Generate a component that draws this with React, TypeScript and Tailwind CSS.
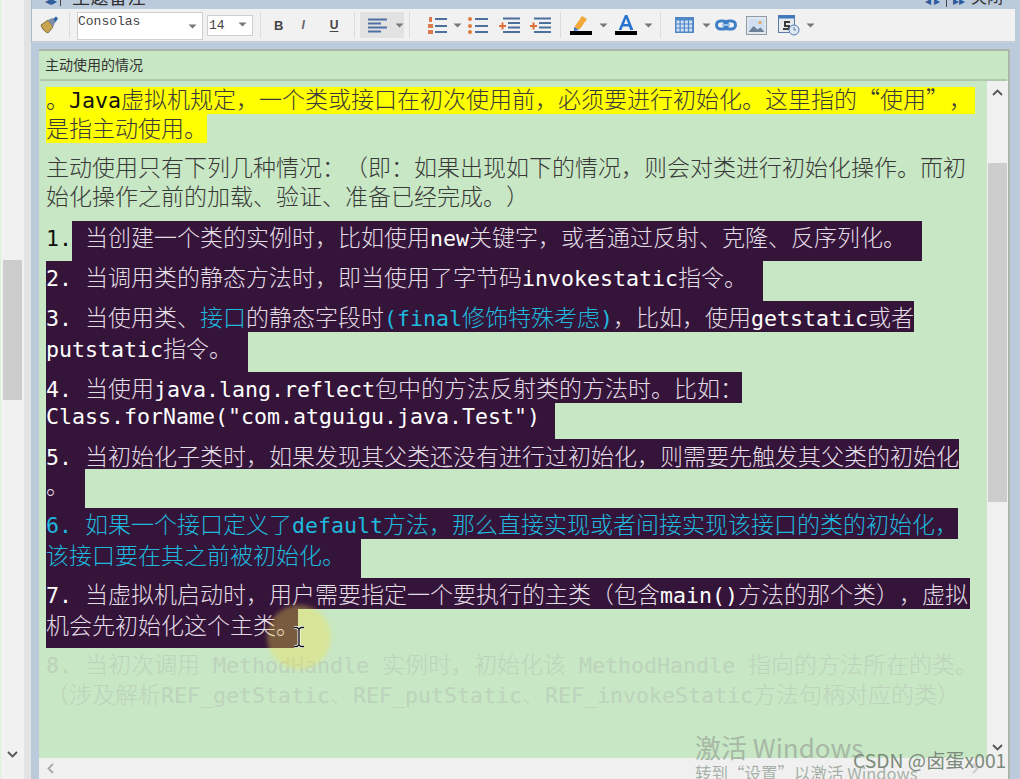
import React from "react";

const cjk = "font-['Noto_Sans_CJK_SC','Noto_Sans_CJK_JP',sans-serif] text-[23px] font-light [text-spacing-trim:space-all] [text-autospace:no-autospace]";
const M = ({ children }: { children: React.ReactNode }) => (
  <span className="font-['DejaVu_Sans_Mono',monospace] text-[21.6px] font-normal">{children}</span>
);
const W = ({ children }: { children: React.ReactNode }) => (
  <span className="font-['DejaVu_Sans_Mono',monospace] text-[21.6px] font-normal text-white">{children}</span>
);
const C = ({ children }: { children: React.ReactNode }) => <span className="text-[#1fb9de]">{children}</span>;

const Caret = ({ className = "" }: { className?: string }) => (
  <svg width="9" height="5" viewBox="0 0 9 5" className={className}>
    <path d="M0.5 0.5h8L4.5 4.5z" fill="#777" />
  </svg>
);
const Sep = ({ className = "" }: { className?: string }) => <div className={`w-px h-[26px] bg-[#dcdcdc] ${className}`} />;

const Line = ({ w, h, lead = "leading-[30px]", children, cyan = false }: { w: string; h: string; lead?: string; children: React.ReactNode; cyan?: boolean }) => (
  <div className={`whitespace-nowrap bg-[#35143a] ${w} ${h} ${lead} ${cyan ? "text-[#1fb9de]" : "text-[#e2dce4]"}`}>{children}</div>
);

const Brush = () => (
  <svg width="20" height="18" viewBox="0 0 20 18">
    <path d="M1 9l7-5 5 7-5 6C5 16 2 13 1 9z" fill="#c9a550" stroke="#6b5a2e" strokeWidth="0.8" />
    <path d="M8 4l4-2 4 3-3 6z" fill="#7d8fa8" />
    <path d="M13 3l3-2.4 2 2L15.6 6z" fill="#2f62a8" />
  </svg>
);

const AlignLeft = () => (
  <svg width="19" height="15" viewBox="0 0 19 15" fill="#4d71a3">
    <rect x="0" y="0.5" width="19" height="2" />
    <rect x="0" y="4.5" width="13" height="2" />
    <rect x="0" y="8.5" width="19" height="2" />
    <rect x="0" y="12.5" width="13" height="2" />
  </svg>
);
const Numbered = () => (
  <svg width="19" height="19" viewBox="0 0 19 19">
    <g fill="#de7a4e">
      <rect x="1" y="1" width="3" height="5" />
      <rect x="0" y="8" width="5" height="4" />
      <rect x="0" y="14" width="5" height="4" />
    </g>
    <g fill="#4d6f9e">
      <rect x="7" y="2" width="12" height="2" />
      <rect x="7" y="9" width="12" height="2" />
      <rect x="7" y="15" width="12" height="2" />
    </g>
  </svg>
);
const Bullets = () => (
  <svg width="20" height="19" viewBox="0 0 20 19">
    <g fill="#de7a3e">
      <circle cx="2" cy="3" r="2" />
      <circle cx="2" cy="10" r="2" />
      <circle cx="2" cy="16" r="2" />
    </g>
    <g fill="#4d6f9e">
      <rect x="7" y="2" width="13" height="2" />
      <rect x="7" y="9" width="13" height="2" />
      <rect x="7" y="15" width="13" height="2" />
    </g>
  </svg>
);
const Indent = () => (
  <svg width="21" height="17" viewBox="0 0 21 17">
    <path d="M0 8h2.5V5.5h2V8H7v2H4.5v2.5h-2V10H0z" fill="#e0703a" />
    <g fill="#4d6f9e">
      <rect x="4" y="0.5" width="17" height="2" />
      <rect x="9" y="5" width="12" height="2" />
      <rect x="9" y="9.5" width="12" height="2" />
      <rect x="4" y="14" width="17" height="2" />
    </g>
  </svg>
);
const Highlighter = () => (
  <svg width="22" height="20" viewBox="0 0 22 20">
    <path d="M5 11L12 1l5 3-7 10-5 1z" fill="#f0a93a" />
    <path d="M4 12l5 3-5 1z" fill="#3a78c8" />
    <rect x="0" y="16" width="22" height="4" fill="#000" />
  </svg>
);
const LetterA = () => (
  <svg width="22" height="20" viewBox="0 0 22 20">
    <path d="M11 0h2.4l6 15h-3.2l-1.3-3.6H8.8L7.5 15H4.6zm-.9 9h4l-2-5.4z" fill="#2874cf" transform="translate(-1 0)" />
    <rect x="0" y="16" width="22" height="4" fill="#000" />
  </svg>
);
const Table = () => (
  <svg width="19" height="16" viewBox="0 0 19 16">
    <rect width="19" height="16" fill="#4f86c6" />
    <g fill="#cfe0f2">
      {[0, 1, 2, 3].map((c) =>
        [0, 1, 2].map((r) => <rect key={`${c}-${r}`} x={1.5 + c * 4.2} y={3.5 + r * 4} width="3" height="3" />)
      )}
    </g>
  </svg>
);
const LinkIcon = () => (
  <svg width="22" height="12" viewBox="0 0 22 12" fill="none">
    <rect x="1.5" y="2" width="11" height="8" rx="4" stroke="#3f7fc6" strokeWidth="3" />
    <rect x="9.5" y="2" width="11" height="8" rx="4" stroke="#3f7fc6" strokeWidth="3" />
    <rect x="7" y="5" width="8" height="2" fill="#9cc3ea" />
  </svg>
);
const ImageIcon = () => (
  <svg width="21" height="19" viewBox="0 0 21 19">
    <rect x="0.5" y="0.5" width="20" height="18" fill="#e4e8ec" stroke="#8e9aa6" />
    <rect x="2.5" y="3" width="16" height="13" fill="#cfdff0" />
    <path d="M2.5 16l5-6 4 3.5 3-2 4 4.5z" fill="#6d8098" />
    <circle cx="14" cy="6.5" r="1.6" fill="#e9a15e" />
  </svg>
);
const Snippet = () => (
  <svg width="22" height="21" viewBox="0 0 22 21">
    <rect x="0.5" y="0.5" width="16" height="17" fill="#e7ebf0" stroke="#5e7da6" />
    <rect x="0.5" y="0.5" width="16" height="3" fill="#3f78bd" />
    <path d="M6 6h6v2H8v2h4v5H5v-2h5v-1H6z" fill="#3b3b3b" />
    <circle cx="16" cy="15" r="5" fill="#dfe7f0" stroke="#4d7cb5" />
    <path d="M16 12v3h2" stroke="#4d7cb5" fill="none" />
  </svg>
);

const Chevron = ({ dir, className = "" }: { dir: "up" | "down" | "left" | "right"; className?: string }) => {
  const d = { up: "M1 6l4.5-4.5L10 6", down: "M1 1l4.5 4.5L10 1", left: "M6 1L1.5 5.5 6 10", right: "M1 1l4.5 4.5L1 10" }[dir];
  const horiz = dir === "up" || dir === "down";
  return (
    <svg width={horiz ? 11 : 7} height={horiz ? 7 : 11} viewBox={horiz ? "0 0 11 7" : "0 0 7 11"} fill="none" className={className}>
      <path d={d} stroke="currentColor" strokeWidth="1.8" />
    </svg>
  );
};

export default function App() {
  return (
    <div className={`relative w-[1020px] h-[779px] overflow-hidden flex bg-[#bccbdc] ${cjk}`}>
      {/* outer left scrollbar */}
      <div className="w-[24px] h-full shrink-0 bg-[#f1f1f1] border-l border-[#dff0dc] flex flex-col items-center text-[#555]">
        <div className="w-[19px] h-[140px] mt-[260px] bg-[#cdcdcd]" />
        <Chevron dir="down" className="mt-[351px]" />
      </div>
      <div className="w-[7px] h-full shrink-0 bg-[#e3e3e3]" />

      {/* main pane */}
      <div className="flex-1 min-w-0 flex flex-col">
        {/* title, cut off by the top of the picture */}
        <div className="h-[9px] shrink-0 overflow-hidden flex bg-[#bccbdc] text-[#333] text-[18px] font-normal leading-[18px] border-l border-[#a9b8ca]">
          <span className="ml-[13px] text-[#2a5a9a] text-[12px] -mt-[9px]">◂▸</span>
          <span className="ml-[3px] w-px h-[6px] bg-[#444]" />
          <span className="ml-[11px] -mt-[13px] tracking-[0.5px]">主题备注</span>
          <span className="ml-auto mr-[17px] -mt-[13px] flex gap-[6px]">
            <span className="text-[#2a5a9a] text-[12px] mt-[4px]">◂ ▸</span>
            <span className="w-px h-[20px] bg-[#444]" />
            <span className="text-[#2a5a9a] text-[12px] mt-[4px]">▸▸</span>
            <span className="text-[16px]">关闭</span>
          </span>
        </div>

        {/* toolbar */}
        <div className="h-[34px] shrink-0 mr-[5px] bg-[#f1f1f1] border-b-[2px] border-[#c6ced8] border-l border-l-[#a9b8ca] flex items-center">
          <div className="ml-[8px]"><Brush /></div>
          <Sep className="ml-[9px]" />
          <div className="ml-[7px] -mt-[3px] relative w-[126px] h-[28px] mb-[-4px] bg-white border border-[#cfcfcf] flex items-start">
            <span className="font-['Liberation_Mono',monospace] font-normal text-[13px] leading-[18px] text-[#444]">Consolas</span>
            <Caret className="absolute right-[5px] top-[11px]" />
          </div>
          <div className="ml-[4px] relative w-[46px] h-[21px] bg-white border border-[#cfcfcf] flex items-center">
            <span className="ml-[1px] font-['Liberation_Mono',monospace] font-normal text-[13px] text-[#444] leading-none">14</span>
            <Caret className="absolute right-[5px] top-[6px]" />
          </div>
          <Sep className="ml-[7px]" />
          <span className="ml-[13px] font-['Liberation_Sans',sans-serif] font-bold text-[13px] leading-none text-[#444]">B</span>
          <span className="ml-[18px] font-['Liberation_Sans',sans-serif] italic font-bold text-[12px] leading-none text-[#666]">I</span>
          <span className="ml-[25px] font-['Liberation_Sans',sans-serif] font-bold text-[12px] leading-none text-[#444] underline underline-offset-2">U</span>
          <Sep className="ml-[16px]" />
          <div className="ml-[5px] w-[44px] h-[26px] bg-[#e2e2e2] flex items-center">
            <div className="ml-[8px]"><AlignLeft /></div>
            <Caret className="ml-[8px]" />
          </div>
          <Sep className="ml-[5px]" />
          <div className="ml-[18px]"><Numbered /></div>
          <Caret className="ml-[6px]" />
          <div className="ml-[6px]"><Bullets /></div>
          <div className="ml-[11px]"><Indent /></div>
          <div className="ml-[10px]"><Indent /></div>
          <Sep className="ml-[9px]" />
          <div className="ml-[9px]"><Highlighter /></div>
          <Caret className="ml-[7px]" />
          <div className="ml-[7px]"><LetterA /></div>
          <Caret className="ml-[7px]" />
          <Sep className="ml-[7px]" />
          <div className="ml-[14px]"><Table /></div>
          <Caret className="ml-[8px]" />
          <div className="ml-[4px]"><LinkIcon /></div>
          <div className="ml-[9px]"><ImageIcon /></div>
          <div className="ml-[11px]"><Snippet /></div>
          <Caret className="ml-[6px]" />
        </div>

        <div className="h-[6px] shrink-0" />

        {/* green note panel */}
        <div className="flex-1 min-h-0 ml-[8px] mr-[10px] border-t-[2px] border-r-[2px] border-[#a9b6a9] bg-[#c8e7c4] flex flex-col">
          <div className="h-[30px] shrink-0 flex items-center border-b-[2px] border-[#b0c6ae] ml-[1px] mr-[1px]">
            <span className="ml-[5px] text-[14px] font-normal leading-none text-[#333] -mt-[2px]">主动使用的情况</span>
          </div>
          <div className="flex-1 min-h-0 flex">
            <div className="flex-1 min-w-0 flex flex-col">
              <div className="flex-1 min-h-0 pl-[7px] pt-[6px] text-[#3a3a3a] flex flex-col items-start overflow-hidden">
                <div className="w-[929px] h-[27px] bg-[#ffff00] leading-[22px] whitespace-nowrap">
                  。<span className="text-[#111]"><M>Java</M></span>虚拟机规定，一个类或接口在初次使用前，必须要进行初始化。这里指的“使用”，
                </div>
                <div className="w-[161px] h-[29px] bg-[#ffff00] leading-[26px] whitespace-nowrap">是指主动使用。</div>

                <div className="mt-[8px] h-[30px] leading-[30px] whitespace-nowrap">
                  主动使用只有下列几种情况：（即：如果出现如下的情况，则会对类进行初始化操作。而初
                </div>
                <div className="h-[40px] leading-[28px] whitespace-nowrap">始化操作之前的加载、验证、准备已经完成。）</div>

                <div className="flex h-[40px] whitespace-nowrap leading-[30px]">
                  <span className="w-[26px] text-[#111]"><M>1.</M></span>
                  <span className="w-[850px] bg-[#35143a] text-[#e2dce4] pl-[13px]">
                    当创建一个类的实例时，比如使用<W>new</W>关键字，或者通过反射、克隆、反序列化。
                  </span>
                </div>
                <Line w="w-[717px]" h="h-[40px]">
                  <W>2. </W>当调用类的静态方法时，即当使用了字节码<W>invokestatic</W>指令。
                </Line>
                <Line w="w-[868px]" h="h-[31px]">
                  <W>3. </W>当使用类、<C>接口</C>的静态字段时<C><M>(final</M>修饰特殊考虑<M>)</M></C>，比如，使用<W>getstatic</W>或者
                </Line>
                <Line w="w-[202px]" h="h-[40px]">
                  <W>putstatic</W>指令。
                </Line>
                <Line w="w-[696px]" h="h-[31px]">
                  <W>4. </W>当使用<W>java.lang.reflect</W>包中的方法反射类的方法时。比如：
                </Line>
                <Line w="w-[509px]" h="h-[36px]" lead="leading-[22px]">
                  <W>Class.forName("com.atguigu.java.Test")</W>
                </Line>
                <Line w="w-[913px]" h="h-[30px]" lead="leading-[32px]">
                  <W>5. </W>当初始化子类时，如果发现其父类还没有进行过初始化，则需要先触发其父类的初始化
                </Line>
                <Line w="w-[39px]" h="h-[39px]">。</Line>
                <Line w="w-[912px]" h="h-[31px]" cyan>
                  <M>6. </M>如果一个接口定义了<M>default</M>方法，那么直接实现或者间接实现该接口的类的初始化，
                </Line>
                <Line w="w-[315px]" h="h-[39px]" cyan>该接口要在其之前被初始化。</Line>
                <Line w="w-[924px]" h="h-[31px]">
                  <W>7. </W>当虚拟机启动时，用户需要指定一个要执行的主类（包含<W>main()</W>方法的那个类），虚拟
                </Line>
                <Line w="w-[252px]" h="h-[39px]">机会先初始化这个主类。</Line>

                <div className="h-[30px] leading-[30px] text-[#bdd3bc] whitespace-nowrap">
                  <M>8. </M>当初次调用<M> MethodHandle </M>实例时，初始化该<M> MethodHandle </M>指向的方法所在的类。
                </div>
                <div className="h-[30px] leading-[30px] text-[#bdd3bc] whitespace-nowrap">
                  （涉及解析<M>REF_getStatic</M>、<M>REF_putStatic</M>、<M>REF_invokeStatic</M>方法句柄对应的类）
                </div>
              </div>
              {/* horizontal scrollbar */}
              <div className="h-[21px] shrink-0 bg-[#f0f0f0] flex items-center justify-between px-[8px] text-[#aaa]">
                <Chevron dir="left" />
                <Chevron dir="right" className="text-[#ccc]" />
              </div>
            </div>
            {/* vertical scrollbar */}
            <div className="w-[21px] shrink-0 bg-[#f0f0f0] flex flex-col items-center text-[#555]">
              <Chevron dir="up" className="mt-[8px]" />
              <div className="w-[19px] h-[339px] mt-[67px] bg-[#cdcdcd]" />
              <Chevron dir="down" className="mt-[242px]" />
            </div>
          </div>
        </div>
      </div>

      {/* cursor spotlight */}
      <div className="absolute left-[267px] top-[605px] w-[64px] h-[64px] rounded-full bg-[#f5e34a]/35 blur-[2px]" />
      <svg width="14" height="22" viewBox="0 0 14 22" className="absolute left-[292px] top-[626px]">
        <path d="M2 1.5h3l2 1.5 2-1.5h3M7 3v16M2 20.5h3l2-1.5 2 1.5h3" stroke="#fff" strokeWidth="3" fill="none" />
        <path d="M2 1.5h3l2 1.5 2-1.5h3M7 3v16M2 20.5h3l2-1.5 2 1.5h3" stroke="#111" strokeWidth="1.4" fill="none" />
      </svg>

      {/* overlays: activation watermark and site credit */}
      <div className="absolute left-[695px] top-[729px] text-[26px] font-normal leading-[36px] text-[#a7b8a6] whitespace-nowrap">
        激活 Windows
      </div>
      <div className="absolute left-[695px] top-[763px] text-[16.5px] font-normal leading-[20px] text-[#a7b0a7] whitespace-nowrap">
        转到“设置”以激活 Windows
      </div>
      <div className="absolute left-[853px] top-[746px] text-[19.3px] font-normal leading-[28px] text-[#7c8a7c] whitespace-nowrap">
        CSDN @卤蛋x001
      </div>
    </div>
  );
}
